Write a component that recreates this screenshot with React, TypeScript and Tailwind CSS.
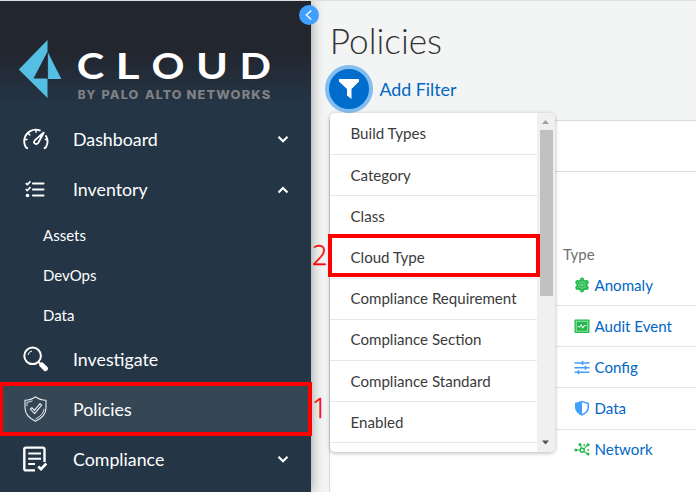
import React from "react";

type IconProps = { className?: string };

function LogoMark({ className = "h-[60px] w-[44px] shrink-0" }: IconProps) {
  return (
    <svg viewBox="0 0 44 60" className={className}>
      <path fill="#54bfe3" fillRule="evenodd" d="M29.500 1V59L.8 30.500ZM29.300 13L15.500 39.500H29.300Z" />
      <path fill="#54bfe3" d="M30 13.500L43.300 40H30Z" />
      <path stroke="#243546" strokeWidth=".7" d="M29.600 13V40" />
    </svg>
  );
}

function GaugeIcon() {
  return (
    <svg viewBox="0 0 26 22" className="h-[22px] w-[26px]" fill="none" stroke="white" strokeWidth="1.900" strokeLinecap="round">
      <path d="M4.200 20.200L2.600 18.800A11.600 11.600 0 0 1 1.500 10.800A11.600 11.600 0 0 1 16.800 2.400M23 8A11.600 11.600 0 0 1 23.200 18.800L21.600 20.200" />
      <path strokeWidth="1.500" d="M13 2V4.300M5.400 5.600L6.800 7M1.800 11.500H4M24.200 11.500H22.300" />
      <path strokeWidth="1.800" d="M21 4.300L15.300 14.800Q13 17 11.400 15.200Q10.500 13.600 12 12.100Z" />
    </svg>
  );
}

function ListIcon() {
  return (
    <svg viewBox="0 0 20 18" className="ml-[2px] h-[18px] w-[20px]" fill="none" stroke="white">
      <path strokeWidth="2.100" strokeLinecap="round" d="M8 3.500H18.500M8 9.500H18.500M8 15.500H18.500" />
      <path strokeWidth="1.700" d="M.8 3.200L2.300 4.600L5.500 1.300M.8 9L2.300 10.500L5.500 7.200" />
      <circle cx="2.500" cy="15.500" r="1.800" fill="white" stroke="none" />
    </svg>
  );
}

function SearchIcon() {
  return (
    <svg viewBox="0 0 26 26" className="h-[26px] w-[26px]" fill="none" stroke="white">
      <circle cx="9.600" cy="9.800" r="8.300" strokeWidth="2" />
      <path strokeWidth="1" d="M5 9Q5.500 5.500 9 5" />
      <path strokeWidth="2" d="M15.500 16L18 18.500" />
      <path strokeWidth="5" strokeLinecap="round" d="M18.800 19L22.500 22.600" />
    </svg>
  );
}

function ShieldCheckIcon() {
  return (
    <svg viewBox="0 0 24 26" className="h-[26px] w-[24px]" fill="none" stroke="#edf1f3" strokeWidth="1.100" strokeLinejoin="round">
      <path d="M12.500 .8Q17 4.200 23 4.300V12Q22.800 20.500 12.500 25.200Q2.200 20.500 2 12V4.300Q8 4.200 12.500 .8Z" />
      <path strokeWidth=".9" d="M4 10V6.200Q7 6 9.500 4.700M21 13Q20.400 19 12.500 23" />
      <path d="M7.300 13.200L8.900 11.700L11.500 14.300L17 7.700L18.700 9.200L11.700 17.600Z" />
    </svg>
  );
}

function ComplianceIcon() {
  return (
    <svg viewBox="0 0 25 26" className="h-[26px] w-[25px]" fill="none" stroke="white">
      <path strokeWidth="2.400" strokeLinejoin="round" d="M21.500 16V3.200Q21.500 1.600 20 1.600H2.800Q1.300 1.600 1.300 3.200V22.800Q1.300 24.400 2.800 24.400H12" />
      <path strokeWidth="2" d="M5.200 7.500H18M5.200 12.800H18M5.200 18H12" />
      <path strokeWidth="2.600" d="M15.300 20.500L18 23.200L23.300 17.500" />
    </svg>
  );
}

function Chevron({ up = false }: { up?: boolean }) {
  return (
    <svg viewBox="0 0 12 8" className={up ? "absolute left-[277px] top-[21px] h-2 w-3" : "absolute left-[277px] top-[20px] h-2 w-3"} fill="none" stroke="white" strokeWidth="2.100">
      <path d={up ? "M1.500 6.500L6 2L10.500 6.500" : "M1.500 1.800L6 6.300L10.500 1.800"} />
    </svg>
  );
}

function NavItem({ label, icon, chevron, active }: { label: string; icon: React.ReactNode; chevron?: "up" | "down"; active?: boolean }) {
  return (
    <div className={active ? "relative flex h-[50px] items-center bg-[#354655] pb-[2px] pl-[23px]" : "relative flex h-[50px] items-center pb-[2px] pl-[23px]"}>
      <div className="flex w-[50px] items-center">{icon}</div>
      <span className="text-[17.800px] leading-6">{label}</span>
      {chevron && <Chevron up={chevron === "up"} />}
    </div>
  );
}

const logoLetters = [
  { ch: "C", x: 0.8, w: 27.5 },
  { ch: "L", x: 39.5, w: 24 },
  { ch: "O", x: 75.500, w: 33 },
  { ch: "U", x: 120, w: 32 },
  { ch: "D", x: 163.500, w: 31.500 },
];

const logoWords = [
  { word: "BY", x: 1.800, w: 18.500 },
  { word: "PALO", x: 25.500, w: 38 },
  { word: "ALTO", x: 69, w: 37.500 },
  { word: "NETWORKS", x: 110.500, w: 85 },
];

function Wordmark() {
  return (
    <svg viewBox="0 0 200 70" className="ml-[14px] h-[70px] w-[200px]">
      {logoLetters.map((l) => (
        <text key={l.ch} x={l.x} y="40" fill="white" fontFamily="Lato, sans-serif" fontSize="37" fontWeight="700" textLength={l.w} lengthAdjust="spacingAndGlyphs">{l.ch}</text>
      ))}
      {logoWords.map((l) => (
        <text key={l.word} x={l.x} y="60" fill="#808184" fontFamily="Inter, sans-serif" fontSize="11.500" fontWeight="800" letterSpacing="1" textLength={l.w} lengthAdjust="spacingAndGlyphs">{l.word}</text>
      ))}
    </svg>
  );
}

function Sidebar() {
  return (
    <aside className="relative z-10 h-[491px] w-[311px] shrink-0 bg-[#243546] text-white shadow-[0_0_12px_rgba(0,0,0,0.4)]">
      <div className="flex h-[114px] bg-linear-to-b from-[#22262f] from-45% to-[#243546] to-90% pl-[18px] pt-[38px]">
        <LogoMark />
        <Wordmark />
      </div>
      <nav>
        <NavItem label="Dashboard" icon={<GaugeIcon />} chevron="down" />
        <NavItem label="Inventory" icon={<ListIcon />} chevron="up" />
        {["Assets", "DevOps", "Data"].map((s) => (
          <div key={s} className="flex h-10 items-center pl-[43px] text-[15px]">{s}</div>
        ))}
        <NavItem label="Investigate" icon={<SearchIcon />} />
        <NavItem label="Policies" icon={<ShieldCheckIcon />} active />
        <NavItem label="Compliance" icon={<ComplianceIcon />} chevron="down" />
      </nav>
      <button className="absolute left-[299px] top-[4px] flex size-5 items-center justify-center rounded-full bg-[#409fff]">
        <svg viewBox="0 0 20 20" className="size-5" fill="none" stroke="white" strokeWidth="1.300">
          <path d="M12.300 5.500L7.300 10L12.300 14.500" />
        </svg>
      </button>
    </aside>
  );
}

function AnomalyIcon() {
  return (
    <svg viewBox="0 0 16 16" className="size-4">
      <g fill="#22b84c">
        <circle cx="8" cy="8" r="5.500" />
        <circle cx="8" cy="2.700" r="2.100" /><circle cx="8" cy="13.300" r="2.100" />
        <circle cx="3.500" cy="5.200" r="2.200" /><circle cx="12.500" cy="5.200" r="2.200" />
        <circle cx="3.500" cy="10.800" r="2.200" /><circle cx="12.500" cy="10.800" r="2.200" />
      </g>
      <g fill="none" stroke="#a3e2b3" strokeWidth=".7">
        <circle cx="8" cy="8" r="3.300" />
        <circle cx="8" cy="8" r="1.200" />
      </g>
      <path stroke="#a3e2b3" strokeWidth=".7" d="M8 2V3.200M8 12.800V14M3 5L4 5.600M12 10.400L13 11M3 11L4 10.400M12 5.600L13 5" />
    </svg>
  );
}

function AuditIcon() {
  return (
    <svg viewBox="0 0 16 16" className="size-4">
      <rect x=".5" y="1.500" width="15" height="13.500" rx=".8" fill="#22b84c" />
      <rect x="2.200" y="3.200" width="11.600" height="10" fill="none" stroke="#b5e8c1" strokeWidth=".8" />
      <path fill="none" stroke="white" strokeWidth="1" d="M3.800 8.800H6L7.200 6.700L8.700 10.200L10 7.700H12.300" />
    </svg>
  );
}

function ConfigIcon() {
  return (
    <svg viewBox="0 0 16 16" className="size-4" stroke="#409fff">
      <path strokeWidth="1.500" d="M.5 4H15.500M.5 8.700H15.500M.5 13.300H15.500" />
      <path strokeWidth="1.600" d="M8.500 2V6M11.500 6.700V10.700M4.500 11.300V15.300" />
    </svg>
  );
}

function DataIcon() {
  return (
    <svg viewBox="0 0 16 16" className="size-4">
      <path fill="#409fff" fillRule="evenodd" d="M8 .8L15 3V7.500Q14.800 13 8 15.700Q1.200 13 1 7.500V3ZM8 2.300V14Q13.200 11.500 13.400 7.500V4.100Z" />
    </svg>
  );
}

function NetworkIcon() {
  return (
    <svg viewBox="0 0 16 16" className="size-4" fill="#22b84c" stroke="#22b84c">
      <path fill="none" strokeWidth="1.100" d="M2 9H6.500M8 8L6.300 4M9.500 8.500L13.500 4.200M9.500 10.200L14 13" />
      <circle cx="8.200" cy="9.300" r="2" fill="white" strokeWidth="1.400" />
      <g stroke="none"><circle cx="1.900" cy="9" r="1.500" /><circle cx="6" cy="3.500" r="1.500" /><circle cx="10.300" cy="4.300" r="1" /><circle cx="14" cy="3.700" r="1.500" /><circle cx="14.200" cy="9" r="1" /><circle cx="14" cy="13" r="1.500" /></g>
    </svg>
  );
}

const types = [
  { label: "Anomaly", icon: <AnomalyIcon /> },
  { label: "Audit Event", icon: <AuditIcon /> },
  { label: "Config", icon: <ConfigIcon /> },
  { label: "Data", icon: <DataIcon /> },
  { label: "Network", icon: <NetworkIcon /> },
];

const filters = ["Build Types", "Category", "Class", "Cloud Type", "Compliance Requirement", "Compliance Section", "Compliance Standard", "Enabled"];

function FilterMenu() {
  return (
    <div className="absolute left-[19px] top-[112px] flex h-[339px] w-[225px] overflow-hidden rounded-[5px] bg-white shadow-[0_1px_4px_rgba(0,0,0,0.3)]">
      <ul className="w-[207px] pt-[0.800px]">
        {filters.map((f) => (
          <li key={f} className="flex h-[41.200px] items-center border-b border-[#e6e7e8] pb-[0.800px] pl-[20.500px] text-[15.100px] leading-[20px] text-[#3b3b3b]">{f}</li>
        ))}
      </ul>
      <div className="flex w-[18px] flex-col items-center bg-[#f0f0f0]">
        <svg viewBox="0 0 18 17" className="h-[17px] w-[18px]"><path fill="#a0a0a0" d="M5 11H12L8.500 7Z" /></svg>
        <div className="h-[166px] w-[13px] bg-[#c1c1c1]" />
        <svg viewBox="0 0 18 17" className="mt-auto h-[17px] w-[18px]"><path fill="#505050" d="M5 5.500H12L8.500 9.500Z" /></svg>
      </div>
    </div>
  );
}

function MainPane() {
  return (
    <main className="relative flex h-[491px] flex-1 flex-col pl-[18px]">
      <h1 className="mt-[16px] h-[47px] pl-[0.800px] text-[35.200px] font-light leading-[46px] text-[#333]">Policies</h1>
      <div className="flex h-[56px] items-start gap-[6.500px]">
        <button className="-ml-[4px] mt-px flex size-[48px] items-center justify-center rounded-full border-4 border-[#84bdf0] bg-[#006dcc]">
          <svg viewBox="0 0 22 22" className="size-[22px]" fill="white"><path d="M1 1H21V3.500L13.500 11V21L9 17.500V11L1 3.500Z" /></svg>
        </button>
        <span className="mt-[13px] text-[17.800px] leading-6 text-[#0067c5]">Add Filter</span>
      </div>
      <section className="flex flex-1 flex-col border-l border-t border-[#d8dbdc] bg-white">
        <div className="h-[51px] border-b border-[#d8dbdc]" />
        <div className="h-[92.800px] pl-[233px] pt-[70px] text-[15px] leading-6 text-[#707070]">Type</div>
        <div>
          {types.map((t, i) => (
            <div key={t.label} className={i === 4 ? "flex h-[41.200px] items-center gap-[5px] pb-[2px] pl-[243.500px]" : "flex h-[41.200px] items-center gap-[5px] border-b border-[#e4e6e7] pb-[0.400px] pl-[243.500px]"}>
              {t.icon}
              <span className="text-[15.100px] leading-[20px] text-[#0067c5]">{t.label}</span>
            </div>
          ))}
        </div>
      </section>
      <FilterMenu />
    </main>
  );
}

function Annotations() {
  return (
    <div className="pointer-events-none absolute inset-0 z-20 font-['Open_Sans',sans-serif] text-[27px] font-light leading-[30px] text-[#f00] [-webkit-text-stroke:0.4px_#f00]">
      <div className="absolute left-[-1px] top-[381px] h-[54px] w-[313px] border-4 border-[#f00]" />
      <div className="absolute left-[328px] top-[233px] h-[43px] w-[212px] border-4 border-[#f00]" />
      <span className="absolute left-[312px] top-[392px]">1</span>
      <span className="absolute left-[312px] top-[239px]">2</span>
    </div>
  );
}

export default function App() {
  return (
    <div className="relative flex h-[492px] w-[696px] overflow-hidden border-t border-[#dde0e3] bg-[#f3f5f4] font-[Lato,sans-serif]">
      <Sidebar />
      <MainPane />
      <Annotations />
    </div>
  );
}
